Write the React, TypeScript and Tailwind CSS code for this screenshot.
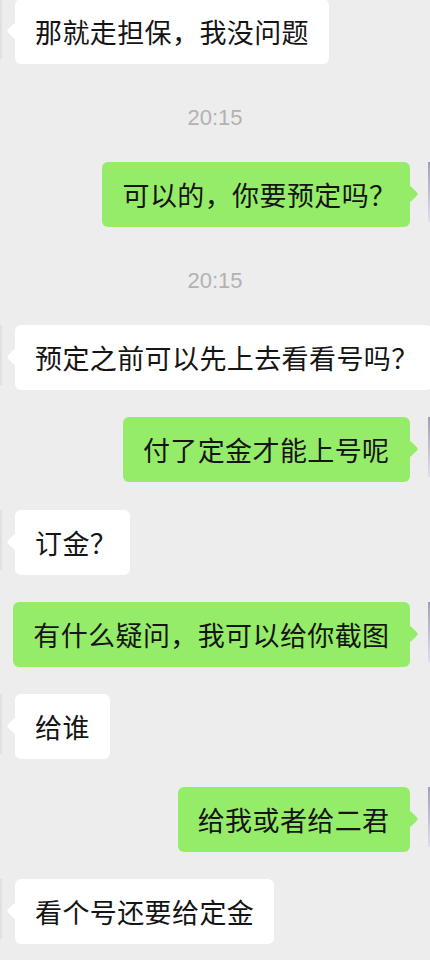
import React from 'react';

type Msg =
  | { kind: 'time'; text: string }
  | { kind: 'in' | 'out'; text: string };

const messages: Msg[] = [
  { kind: 'in', text: '那就走担保，我没问题' },
  { kind: 'time', text: '20:15' },
  { kind: 'out', text: '可以的，你要预定吗？' },
  { kind: 'time', text: '20:15' },
  { kind: 'in', text: '预定之前可以先上去看看号吗？' },
  { kind: 'out', text: '付了定金才能上号呢' },
  { kind: 'in', text: '订金？' },
  { kind: 'out', text: '有什么疑问，我可以给你截图' },
  { kind: 'in', text: '给谁' },
  { kind: 'out', text: '给我或者给二君' },
  { kind: 'in', text: '看个号还要给定金' },
];

// the trailing ？ sits narrower in the original, so pull the padding in a bit
const renderText = (text: string) => {
  if (text.endsWith('？')) {
    return (
      <>
        {text.slice(0, -1)}
        <span className="mr-[-7px]">？</span>
      </>
    );
  }
  return text;
};

const Bubble: React.FC<{ text: string; out?: boolean }> = ({ text, out }) => (
  <div
    className={`relative shrink-0 whitespace-nowrap rounded-[6px] px-[20px] py-[14px] text-[27px] leading-[37px] tracking-[0.4px] text-[#151515] ${
      out ? 'bg-[#95ec69]' : 'bg-white'
    }`}
  >
    {/* tail */}
    <span
      className={`absolute top-[26px] h-[12px] w-[12px] rotate-45 rounded-[2px] ${
        out ? 'right-[-6px] bg-[#95ec69]' : 'left-[-6px] bg-white'
      }`}
    />
    <span className="relative">{renderText(text)}</span>
  </div>
);

export default function App() {
  return (
    <div
      className="h-[960px] w-[430px] overflow-hidden bg-[#ededed]"
      style={{ fontFamily: '"Noto Sans CJK SC", "Noto Sans", sans-serif' }}
    >
      <div className="mt-[-1px] flex flex-col">
        {messages.map((m, i) => {
          if (m.kind === 'time') {
            return (
              <div
                key={i}
                className="flex justify-center pt-[43px] pb-[33px] text-[22px] leading-[22px] text-[#b2b2b2]"
                style={{ fontFamily: '"Liberation Sans", Arial, sans-serif' }}
              >
                {m.text}
              </div>
            );
          }
          const next = messages[i + 1];
          const gap = next && next.kind !== 'time' ? 'mb-[27.33px]' : '';
          if (m.kind === 'out') {
            return (
              <div key={i} className={`flex items-start justify-end ${gap}`}>
                <Bubble text={m.text} out />
                <div className="ml-[18.5px] h-[60px] w-[2px] shrink-0 bg-gradient-to-b from-[#a39cc0] to-[#e2deec]" />
              </div>
            );
          }
          return (
            <div key={i} className={`flex items-start ${gap}`}>
              <div className="mr-[13px] h-[60px] w-[2px] shrink-0 bg-[#e6dfe2]" />
              <Bubble text={m.text} />
            </div>
          );
        })}
      </div>
    </div>
  );
}
